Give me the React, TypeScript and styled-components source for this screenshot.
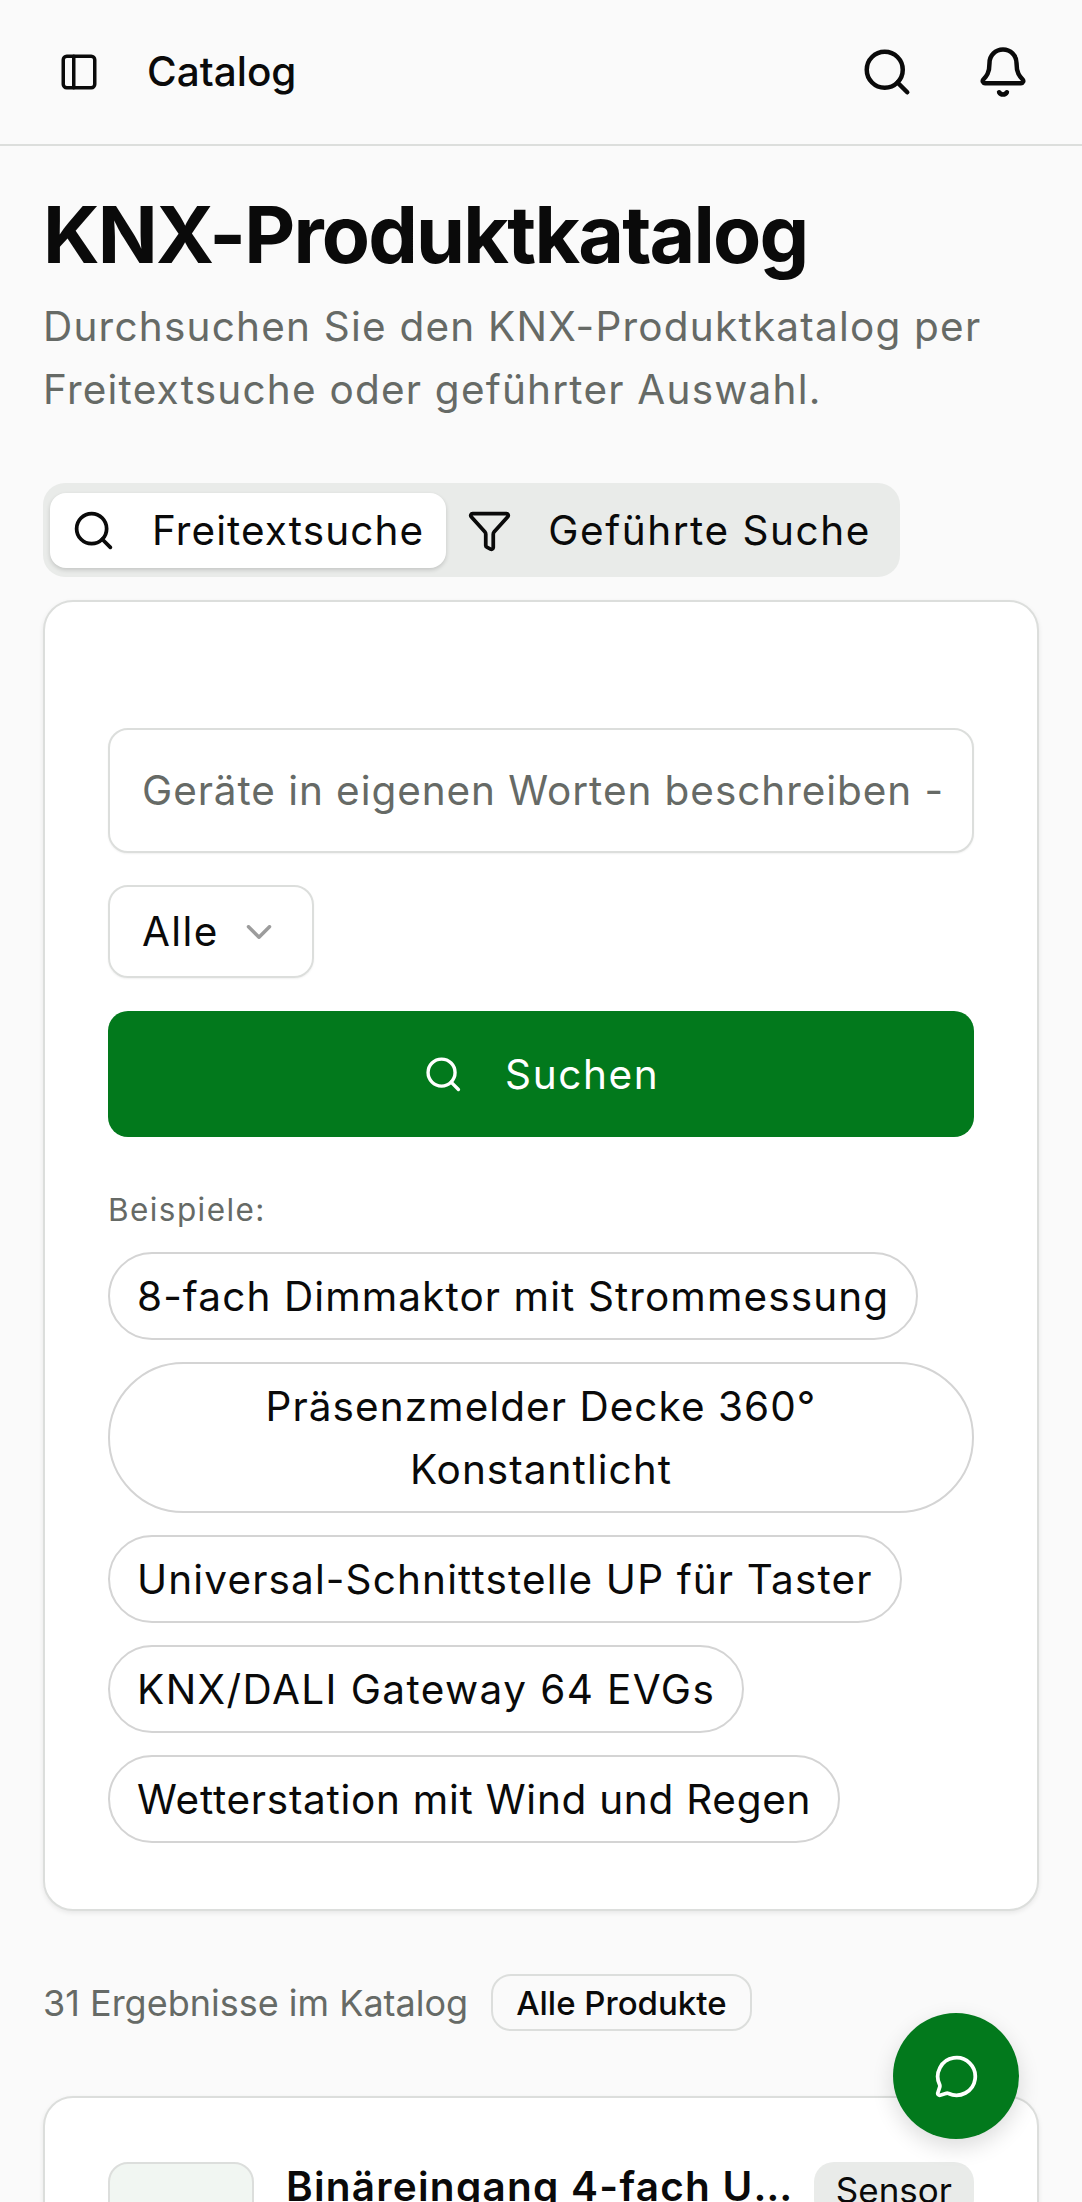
import React from "react";
import styled, { createGlobalStyle } from "styled-components";
import { Bell, ChevronDown, Funnel, MessageCircle, PanelLeft, Search } from "lucide-react";

const GlobalStyle = createGlobalStyle`
  html, body {
    margin: 0;
    padding: 0;
    background: #fafafa;
    overflow: hidden;
  }
  body {
    font-family: Inter, "Liberation Sans", sans-serif;
    color: #0a0a0a;
  }
  * {
    box-sizing: border-box;
  }
`;

const Page = styled.div`
  position: relative;
  height: 2202px;
  overflow: hidden;
`;

const Header = styled.header`
  display: flex;
  align-items: center;
  justify-content: space-between;
  height: 146px;
  padding: 0 43px 0 58px;
  border-bottom: 2px solid #dcdedc;
`;

const HeaderLeft = styled.div`
  display: flex;
  align-items: center;
  gap: 47px;
`;

const HeaderTitle = styled.span`
  font-size: 40.5px;
  font-weight: 500;
  line-height: 54px;
`;

const HeaderRight = styled.div`
  display: flex;
  align-items: center;
  gap: 62px;
  padding-right: 9px;
`;

const Main = styled.main`
  padding: 44px 43px 0;
`;

const Title = styled.h1`
  margin: 0;
  font-size: 78.75px;
  line-height: 90px;
  font-weight: 700;
  letter-spacing: -0.023em;
  color: #0a0a0a;
`;

const Subtitle = styled.p`
  margin: 15px 0 0;
  font-size: 40.5px;
  line-height: 63px;
  letter-spacing: 0.03em;
  color: #666a66;
`;

const Tabs = styled.div`
  display: inline-flex;
  align-items: center;
  margin-top: 62px;
  height: 94px;
  padding: 0 7px;
  background: #e9ebe9;
  border-radius: 22px;
  vertical-align: top;
`;

const Tab = styled.div<{ $active?: boolean }>`
  display: flex;
  align-items: center;
  gap: 36px;
  height: 75px;
  padding: 0 22px 0 21px;
  border-radius: 16px;
  font-size: 40.5px;
  letter-spacing: ${(props) => (props.$active ? "0.027em" : "0.038em")};
  background: ${(props) => (props.$active ? "#ffffff" : "transparent")};
  box-shadow: ${(props) => (props.$active ? "0 2px 4px rgba(0,0,0,0.16)" : "none")};
`;

const Card = styled.section`
  background: #ffffff;
  border: 2px solid #dcdedc;
  border-radius: 30px;
  box-shadow: 0 2px 5px rgba(0, 0, 0, 0.08);
`;

const SearchCard = styled(Card)`
  display: flex;
  flex-direction: column;
  margin-top: 23px;
  padding: 126px 63px 66px;
`;

const SearchInput = styled.div`
  display: flex;
  align-items: center;
  height: 125px;
  padding: 0 32px;
  border: 2px solid #dcdedc;
  border-radius: 20px;
  background: #fff;
  box-shadow: 0 1px 2px rgba(0, 0, 0, 0.06);
  font-size: 40.5px;
  letter-spacing: 0.023em;
  color: #666a66;
  white-space: nowrap;
  overflow: hidden;
`;

const Select = styled.div`
  display: flex;
  align-items: center;
  gap: 19px;
  width: 206px;
  height: 93px;
  margin-top: 32px;
  padding: 0 0 0 32px;
  border: 2px solid #dcdedc;
  border-radius: 20px;
  box-shadow: 0 1px 2px rgba(0, 0, 0, 0.06);
  font-size: 40.5px;
  letter-spacing: 0.035em;
`;

const SearchButton = styled.div`
  display: flex;
  align-items: center;
  justify-content: center;
  gap: 42px;
  height: 126px;
  margin-top: 33px;
  border-radius: 20px;
  background: #02791c;
  color: #fff;
  font-size: 40.5px;
  letter-spacing: 0.04em;
`;

const ExamplesLabel = styled.div`
  margin-top: 50px;
  font-size: 31.5px;
  line-height: 45px;
  letter-spacing: 0.045em;
  color: #666a66;
`;

const Chips = styled.div`
  display: flex;
  flex-wrap: wrap;
  gap: 22px;
  margin-top: 20px;
`;

const Chip = styled.div<{ $tracking: string }>`
  padding: 11px 27px 10px;
  border: 2px solid #d4d4d4;
  border-radius: 9999px;
  background: #fff;
  font-size: 40.5px;
  line-height: 63px;
  letter-spacing: ${(props) => props.$tracking};
  text-align: center;
`;

const ResultRow = styled.div`
  display: flex;
  align-items: center;
  gap: 23px;
  margin-top: 63px;
`;

const ResultCount = styled.span`
  font-size: 36px;
  color: #666a66;
`;

const Outline = styled.span`
  display: flex;
  align-items: center;
  height: 57px;
  padding: 0 23px;
  border: 2px solid #dcdedc;
  border-radius: 20px;
  font-size: 33px;
  font-weight: 500;
`;

const ProductCard = styled(Card)`
  display: flex;
  gap: 32px;
  margin-top: 65px;
  padding: 64px 63px;
`;

const Thumb = styled.div`
  flex: none;
  width: 146px;
  height: 146px;
  border: 2px solid #dcdedc;
  border-radius: 20px;
  background: #f1f6f2;
`;

const ProductHead = styled.div`
  flex: 1;
  min-width: 0;
  display: flex;
  align-items: flex-start;
  gap: 19px;
`;

const ProductName = styled.div`
  flex: 1;
  min-width: 0;
  font-size: 40.5px;
  line-height: 50px;
  font-weight: 600;
  letter-spacing: 0.031em;
  white-space: nowrap;
  overflow: hidden;
  text-overflow: ellipsis;
`;

const TypeBadge = styled.span`
  flex: none;
  padding: 6px 22px;
  border-radius: 20px;
  background: #e9ebe9;
  font-size: 35px;
  line-height: 45px;
`;

const Fab = styled.div`
  position: absolute;
  left: 893px;
  top: 2013px;
  display: flex;
  align-items: center;
  justify-content: center;
  width: 126px;
  height: 126px;
  border-radius: 50%;
  background: #02791c;
  color: #fff;
  box-shadow: 0 8px 22px rgba(0, 0, 0, 0.14);
`;

const Chevron = styled(ChevronDown)`
  flex: none;
  opacity: 0.4;
`;

const examples = [
  { text: "8-fach Dimmaktor mit Strommessung", tracking: "0.027em" },
  { text: "Präsenzmelder Decke 360° Konstantlicht", tracking: "0.026em" },
  { text: "Universal-Schnittstelle UP für Taster", tracking: "0.028em" },
  { text: "KNX/DALI Gateway 64 EVGs", tracking: "0.035em" },
  { text: "Wetterstation mit Wind und Regen", tracking: "0.018em" },
];

export default function App() {
  return (
    <Page>
      <GlobalStyle />
      <Header>
        <HeaderLeft>
          <PanelLeft size={42} />
          <HeaderTitle>Catalog</HeaderTitle>
        </HeaderLeft>
        <HeaderRight>
          <Search size={54} />
          <Bell size={54} />
        </HeaderRight>
      </Header>
      <Main>
        <Title>KNX-Produktkatalog</Title>
        <Subtitle>
          Durchsuchen Sie den KNX-Produktkatalog per Freitextsuche oder geführter Auswahl.
        </Subtitle>
        <Tabs>
          <Tab $active>
            <Search size={45} />
            Freitextsuche
          </Tab>
          <Tab>
            <Funnel size={45} />
            Geführte Suche
          </Tab>
        </Tabs>
        <SearchCard>
          <SearchInput>Geräte in eigenen Worten beschreiben -</SearchInput>
          <Select>
            Alle
            <Chevron size={42} />
          </Select>
          <SearchButton>
            <Search size={40.5} />
            Suchen
          </SearchButton>
          <ExamplesLabel>Beispiele:</ExamplesLabel>
          <Chips>
            {examples.map((item) => (
              <Chip key={item.text} $tracking={item.tracking}>
                {item.text}
              </Chip>
            ))}
          </Chips>
        </SearchCard>
        <ResultRow>
          <ResultCount>31 Ergebnisse im Katalog</ResultCount>
          <Outline>Alle Produkte</Outline>
        </ResultRow>
        <ProductCard>
          <Thumb />
          <ProductHead>
            <ProductName>Binäreingang 4-fach UP mit Kontakt</ProductName>
            <TypeBadge>Sensor</TypeBadge>
          </ProductHead>
        </ProductCard>
      </Main>
      <Fab>
        <MessageCircle size={45} />
      </Fab>
    </Page>
  );
}
